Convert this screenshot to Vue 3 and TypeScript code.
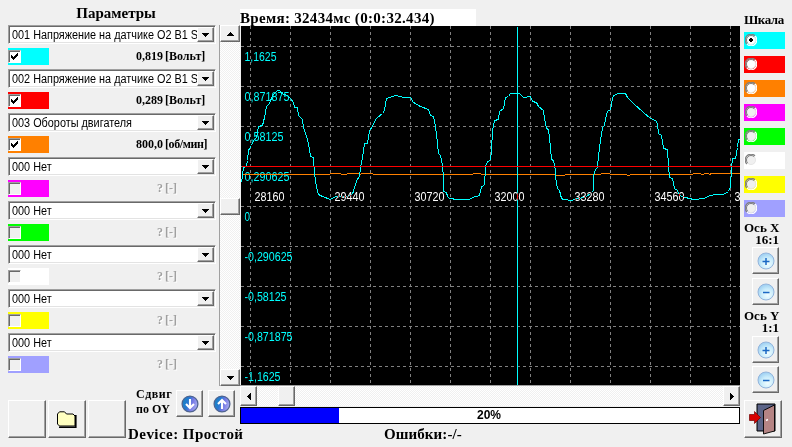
<script setup lang="ts">
interface Channel {
  name: string
  color: string
  value: string
  unit: string
  active: boolean
}

const channels: Channel[] = [
  { name: '001 Напряжение на датчике O2 B1 S1', color: '#00ffff', value: '0,819', unit: '[Вольт]', active: true },
  { name: '002 Напряжение на датчике O2 B1 S2', color: '#ff0000', value: '0,289', unit: '[Вольт]', active: true },
  { name: '003 Обороты двигателя', color: '#ff8000', value: '800,0', unit: '[об/мин]', active: true },
  { name: '000 Нет', color: '#ff00ff', value: '?', unit: '[-]', active: false },
  { name: '000 Нет', color: '#00ff00', value: '?', unit: '[-]', active: false },
  { name: '000 Нет', color: '#ffffff', value: '?', unit: '[-]', active: false },
  { name: '000 Нет', color: '#ffff00', value: '?', unit: '[-]', active: false },
  { name: '000 Нет', color: '#a0a0ff', value: '?', unit: '[-]', active: false },
]

const progress = 20

const gridX = Array.from({ length: 13 }, (_, i) => 9.5 + i * 40)
const gridY = Array.from({ length: 9 }, (_, i) => 20.5 + i * 40)

const yLabels = [
  { text: '1,1625', width: 32 },
  { text: '0,871875', width: 45 },
  { text: '0,58125', width: 39 },
  { text: '0,290625', width: 45 },
  { text: '0', width: 5.5 },
  { text: '-0,290625', width: 48 },
  { text: '-0,58125', width: 42 },
  { text: '-0,871875', width: 48 },
  { text: '-1,1625', width: 36 },
]
const xLabels = ['28160', '29440', '30720', '32000', '33280', '34560', '35840']

const oxygen =
  '241,182 243,167 246,166 247,160 248,150 251,145 253,140 256,137 258,126 262,125 264,117 266,106 269,103 272,95 277,90 279,90 281,93 287,95 ' +
  '290,98 293,102 294,107 297,107 298,115 302,119 303,127 306,136 308,143 310,156 313,157 314,173 316,187 318,194 322,196 330,199 335,196 ' +
  '347,196 352,194 353,190 357,178 359,177 360,167 362,157 364,143 367,143 369,130 372,126 375,119 377,117 382,113 384,110 386,98 392,96 ' +
  '395,95 400,96 403,97 410,97 413,102 420,106 428,109 430,115 433,116 435,126 437,143 438,153 440,155 442,165 443,177 443,191 446,192 ' +
  '447,196 449,198 457,199 469,199 472,197 479,195 481,186 484,185 485,166 487,161 490,160 491,150 492,130 494,120 498,119 499,111 503,108 ' +
  '505,97 508,96 510,93 519,93 523,97 530,96 532,101 536,102 538,106 543,110 544,118 546,128 548,129 550,147 551,159 553,160 555,170 ' +
  '555,177 557,188 559,190 561,198 563,199 571,200 577,198 585,197 591,192 593,190 593,175 595,169 597,167 598,155 600,140 602,127 604,125 ' +
  '605,118 607,111 610,109 612,98 613,95 618,93 625,93 627,97 633,103 643,112 650,118 655,120 657,123 658,133 661,135 663,148 667,149 ' +
  '668,165 669,177 672,178 674,188 677,190 679,195 685,197 693,199 704,198 707,196 714,194 723,194 728,191 730,186 731,167 732,158 ' +
  '735,158 737,147 738,139 740,139'

const rpm =
  '241,174 329,174 330,173 340,173 341,174 346,174 347,173 359,173 360,174 361,173 372,173 373,174 472,174 473,173 480,173 481,174 ' +
  '554,174 555,175 564,175 565,174 600,174 601,173 609,173 610,174 626,174 627,175 629,175 630,174 692,174 693,173 700,173 701,174 ' +
  '703,174 704,173 708,173 709,174 711,173 740,173'
</script>

<template>
  <div class="app">
    <section class="left">
      <h1 class="title">Параметры</h1>
      <div class="panel">
        <div class="channels">
          <div v-for="(c, i) in channels" :key="i" class="channel">
            <div class="combo">
              <span class="combo-text"><span class="squeeze">{{ c.name }}</span></span>
              <span class="raised drop">
                <svg width="7" height="4" shape-rendering="crispEdges"><path d="M0 0h7v1H6v1H5v1H4v1H3V3H2V2H1V1H0z" /></svg>
              </span>
            </div>
            <div class="reading">
              <span class="swatch" :style="{ background: c.color }">
                <span class="check" :class="{ on: c.active }">
                  <svg v-if="c.active" width="7" height="7" shape-rendering="crispEdges"><path d="M0 2h1v1h1v1h1V3h1V2h1V1h1V0h1v3H6v1H5v1H4v1H3v1H2V6H1V5H0z" /></svg>
                </span>
              </span>
              <span class="value" :class="{ off: !c.active }">{{ c.value }}</span>
              <span class="unit" :class="{ off: !c.active, tight: c.unit.length > 7 }">{{ c.unit }}</span>
            </div>
          </div>
        </div>
        <div class="vscroll track">
          <span class="raised arrow-v"><svg width="7" height="4" shape-rendering="crispEdges"><path d="M3 0h1v1h1v1h1v1h1v1H0V3h1V2h1V1h1z" /></svg></span>
          <span class="raised thumb-v"></span>
          <span class="raised arrow-v"><svg width="7" height="4" shape-rendering="crispEdges"><path d="M0 0h7v1H6v1H5v1H4v1H3V3H2V2H1V1H0z" /></svg></span>
        </div>
      </div>
      <div class="tools">
        <button class="raised big"></button>
        <button class="raised big">
          <svg width="20" height="17" viewBox="0 0 20 17">
            <path d="M2 16.200h16.800V4" fill="none" stroke="#000" stroke-width="1.600" />
            <path d="M.5 3 2.500.8h5L9.500 3H16l2 2v10H2.500L.5 13z" fill="#ffffc0" stroke="#000" />
          </svg>
        </button>
        <button class="raised big"></button>
        <div class="shift-area">
          <div class="shift">
            <div class="shift-label"><span class="wide">Сдвиг</span><br />по OY</div>
            <button v-for="dir in ['down', 'up']" :key="dir" class="raised small">
              <svg width="18" height="18" viewBox="0 0 18 18">
                <defs>
                  <linearGradient :id="'ball-' + dir" x1="0" y1="0" x2="1" y2="0.3">
                    <stop offset="0" stop-color="#1289c4" />
                    <stop offset="0.45" stop-color="#2878d0" />
                    <stop offset="0.7" stop-color="#7478e4" />
                    <stop offset="1" stop-color="#a0a4ee" />
                  </linearGradient>
                </defs>
                <circle cx="9" cy="9" r="7.900" :fill="'url(#ball-' + dir + ')'" stroke="#4f6390" stroke-width="1.300" />
                <path
                  :d="dir === 'down' ? 'M9 4v9M5 9l4 4 4-4' : 'M9 14V5M5 9l4-4 4 4'"
                  fill="none" stroke="#fff" stroke-width="2.100"
                />
              </svg>
            </button>
          </div>
          <div class="device">Device: Простой</div>
        </div>
      </div>
    </section>

    <section class="center">
      <div class="time">Время: 32434мс (0:0:32.434)</div>
      <svg class="chart" width="499" height="359" viewBox="0 0 499 359">
        <rect width="499" height="359" fill="#000" />
        <g stroke="#808080" stroke-dasharray="3 3" shape-rendering="crispEdges">
          <line v-for="x in gridX" :key="'x' + x" :x1="x" :x2="x" y1="0" y2="359" />
          <line v-for="y in gridY" :key="'y' + y" x1="0" x2="499" :y1="y" :y2="y" />
        </g>
        <g class="axis" fill="#00ffff">
          <text v-for="(l, i) in yLabels" :key="l.text" x="3.500" :y="35 + i * 40" :textLength="l.width" lengthAdjust="spacingAndGlyphs">{{ l.text }}</text>
        </g>
        <g transform="translate(-240.500 -25.500)" fill="none" shape-rendering="crispEdges">
          <polyline :points="rpm" stroke="#ff8000" />
          <polyline :points="oxygen" stroke="#00ffff" />
          <path d="M517 26V386" stroke="#00ffff" />
          <path d="M241 166H741" stroke="#ff0000" />
        </g>
        <g class="axis xor" fill="#fff">
          <text v-for="(l, i) in xLabels" :key="l" :x="13.500 + i * 80" y="175" textLength="30" lengthAdjust="spacingAndGlyphs">{{ l }}</text>
        </g>
      </svg>
      <div class="hscroll track">
        <span class="raised arrow-h"><svg width="4" height="7" shape-rendering="crispEdges"><path d="M4 0v7H3V6H2V5H1V4H0V3h1V2h1V1h1V0z" /></svg></span>
        <span class="raised thumb-h"></span>
        <span class="raised arrow-h last"><svg width="4" height="7" shape-rendering="crispEdges"><path d="M0 0v7h1V6h1V5h1V4h1V3H3V2H2V1H1V0z" /></svg></span>
      </div>
      <div class="progress">
        <div class="fill" :style="{ width: progress - 0.4 + '%' }"></div>
        <span class="percent">{{ progress }}%</span>
      </div>
      <div class="errors">Ошибки:-/-</div>
    </section>

    <section class="right">
      <h2 class="scale-title">Шкала</h2>
      <div class="scales">
        <div v-for="(c, i) in channels" :key="i" class="scale" :style="{ background: c.color }">
          <svg width="12" height="12" viewBox="0 0 12 12">
            <circle cx="6" cy="6" r="5" :fill="c.active ? '#fff' : '#f0f0f0'" />
            <path d="M1.900 10.100A5.500 5.500 0 0 1 10.100 1.900" fill="none" stroke="#808080" stroke-width="1.200" />
            <path d="M10.100 1.900A5.500 5.500 0 0 1 1.900 10.100" fill="none" stroke="#fff" stroke-width="1.200" />
            <path d="M2.800 9.200A4.500 4.500 0 0 1 9.200 2.800" fill="none" stroke="#606060" stroke-width=".8" />
            <path d="M9.200 2.800A4.500 4.500 0 0 1 2.800 9.200" fill="none" stroke="#e3e3e3" stroke-width=".8" />
            <path v-if="i === 0" d="M5 4h2v1h1v2H7v1H5V7H4V5h1z" shape-rendering="crispEdges" />
          </svg>
        </div>
      </div>
      <div v-for="axis in [{ n: 'X', r: '16:1' }, { n: 'Y', r: '1:1' }]" :key="axis.n" class="zoom" :class="'zoom-' + axis.n">
        <div class="zoom-label">Ось {{ axis.n }}</div>
        <div class="zoom-label ratio">{{ axis.r }}</div>
        <button v-for="sign in ['plus', 'minus']" :key="sign" class="raised small">
          <svg width="18" height="18" viewBox="0 0 18 18">
            <defs>
              <radialGradient :id="'lens-' + axis.n + sign" cx="0.6" cy="0.7" r="0.65">
                <stop offset="0" stop-color="#f0fdff" />
                <stop offset="0.6" stop-color="#c9ecfb" />
                <stop offset="1" stop-color="#a3d3f3" />
              </radialGradient>
            </defs>
            <circle cx="9" cy="9" r="8" :fill="'url(#lens-' + axis.n + sign + ')'" stroke="#93b4dc" />
            <path :d="sign === 'plus' ? 'M5.500 9.500h7M9 6v7' : 'M6 9.500h6.500'" stroke="#1b68c4" stroke-width="1.500" />
          </svg>
        </button>
      </div>
      <button class="raised big exit">
        <svg width="28" height="32" viewBox="0 0 28 32">
          <path d="M8 1h18v27H8z" fill="#50587c" stroke="#000" />
          <path d="M9 2h15L14 7v20H9z" fill="#5c6488" />
          <path d="M14.500 7.500 25.500 2v26l-11 3z" fill="#b58484" stroke="#000" stroke-width=".9" />
          <path d="M17 17.500l2-1" stroke="#fff" stroke-width="1.500" />
          <path d="M.5 11.500h5V8.500l6 6-6 6v-3h-5z" fill="#d80000" stroke="#700000" stroke-width=".7" />
        </svg>
      </button>
    </section>
  </div>
</template>

<style>
body {
  margin: 0;
  background: #f0f0f0;
}
</style>

<style scoped>
.app {
  box-sizing: border-box;
  display: flex;
  width: 792px;
  height: 447px;
  overflow: hidden;
  background: #f0f0f0;
  color: #000;
  font-family: "Liberation Serif", "Times New Roman", serif;
  font-weight: bold;
  white-space: nowrap;
}
.app *,
.app *::before {
  box-sizing: border-box;
}
svg {
  display: block;
  flex: none;
}
.raised {
  display: flex;
  flex: none;
  align-items: center;
  justify-content: center;
  margin: 0;
  padding: 0;
  background: #f0f0f0;
  border: 1px solid;
  border-color: #fff #696969 #696969 #fff;
  border-radius: 0;
  box-shadow: inset -1px -1px #a0a0a0;
}
.track {
  background: repeating-conic-gradient(#f0f0f0 0 25%, #fff 0 50%) 0 0 / 2px 2px;
}

/* left column */
.left {
  flex: none;
  width: 240px;
}
.title {
  margin: 0;
  height: 25px;
  padding: 5px 8px 0 0;
  font-size: 15px;
  line-height: 17px;
  text-align: center;
}
.panel {
  display: flex;
  justify-content: space-between;
  height: 361px;
  padding-left: 8px;
}
.channels {
  width: 208px;
}
.channel {
  height: 44px;
}
.combo {
  display: flex;
  height: 19px;
  background: #fff;
  border: 1px solid;
  border-color: #a0a0a0 #fff #fff #a0a0a0;
  box-shadow: inset 1px 1px #696969, inset -1px -1px #e3e3e3;
  padding: 1px 1px 1px 3px;
}
.combo-text {
  flex: 1;
  overflow: hidden;
  font: 12px/16px "Liberation Sans", Arial, sans-serif;
}
.squeeze {
  display: inline-block;
  transform: scaleX(0.905);
  transform-origin: 0 0;
}
.drop {
  width: 17px;
  height: 15px;
}
.reading {
  display: flex;
  height: 17px;
  margin-top: 4px;
  font-size: 12px;
  line-height: 17px;
}
.swatch {
  display: flex;
  align-items: center;
  width: 41px;
}
.check {
  display: flex;
  align-items: center;
  justify-content: center;
  width: 13px;
  height: 13px;
  background: #f0f0f0;
  border: 1px solid;
  border-color: #a0a0a0 #fff #fff #a0a0a0;
  box-shadow: inset 1px 1px #696969;
}
.check.on {
  background: #fff;
}
.value {
  width: 114px;
  text-align: right;
}
.unit {
  padding-left: 2px;
}
.tight {
  letter-spacing: -0.4px;
}
.off {
  color: #a0a0a0;
  text-shadow: 1px 1px #fff;
}
.vscroll {
  display: flex;
  flex-direction: column;
  justify-content: space-between;
  width: 21px;
  border-left: 1px solid #a0a0a0;
}
.arrow-v,
.thumb-v {
  width: 20px;
  height: 17px;
}
.thumb-v {
  margin-top: 2px;
}
.tools {
  display: flex;
  gap: 2px;
  padding-left: 8px;
}
.big {
  width: 38px;
  height: 38px;
  margin-top: 14px;
}
.shift-area {
  flex: none;
  width: 112px;
}
.shift {
  display: flex;
  gap: 5px;
  padding: 4px 0 0 8px;
}
.shift-label {
  width: 35px;
  margin-top: -4px;
  padding-top: 1px;
  font-size: 12px;
  line-height: 15px;
}
.wide {
  letter-spacing: 0.5px;
}
.small {
  width: 27px;
  height: 27px;
}
.device {
  margin-top: 8px;
  font-size: 15px;
  line-height: 18px;
  letter-spacing: 0.45px;
}

/* oscilloscope */
.center {
  flex: none;
  width: 500px;
  padding-top: 9px;
}
.time {
  width: 236px;
  height: 17px;
  background: #fff;
  font-size: 15px;
  line-height: 18px;
  letter-spacing: 0.31px;
}
.chart {
  margin-left: 1px;
}
.axis {
  font: 12px "Liberation Sans", Arial, sans-serif;
}
.xor {
  mix-blend-mode: difference;
}
.hscroll {
  display: flex;
  height: 21px;
  border-top: 1px solid #a0a0a0;
}
.arrow-h,
.thumb-h {
  width: 17px;
  height: 20px;
}
.thumb-h {
  margin-left: 21px;
}
.last {
  margin-left: auto;
}
.progress {
  position: relative;
  height: 17px;
  margin-top: 1px;
  background: #fff;
  border: 1px solid #000;
}
.fill {
  height: 100%;
  background: #0000ff;
}
.percent {
  position: absolute;
  inset: 0;
  padding-right: 2px;
  font: bold 12px/15px "Liberation Sans", Arial, sans-serif;
  text-align: center;
}
.errors {
  margin-top: 1px;
  padding-left: 144px;
  font-size: 15px;
  line-height: 18px;
  letter-spacing: 0.1px;
}

/* right column */
.right {
  flex: none;
  width: 52px;
  padding-left: 4px;
}
.scale-title {
  margin: 0;
  height: 32px;
  padding-top: 12px;
  font-size: 13px;
  line-height: 16px;
  letter-spacing: -0.45px;
}
.scales {
  display: flex;
  flex-direction: column;
  gap: 7px;
  height: 190px;
}
.scale {
  flex: none;
  display: flex;
  width: 41px;
  height: 17px;
  padding: 2px 0 0 1px;
}
.zoom {
  display: flex;
  flex-direction: column;
  height: 88px;
  width: 35px;
}
.zoom-label {
  height: 12px;
  font-size: 13px;
  line-height: 12px;
}
.ratio {
  text-align: right;
}
.zoom .small {
  margin: 1px 0 0 8px;
}
.zoom .small + .small {
  margin-top: 4px;
}
.zoom-Y .small {
  margin-top: 2px;
}
.zoom-Y .small + .small {
  margin-top: 3px;
}
.exit {
  margin-top: 2px;
}
</style>
